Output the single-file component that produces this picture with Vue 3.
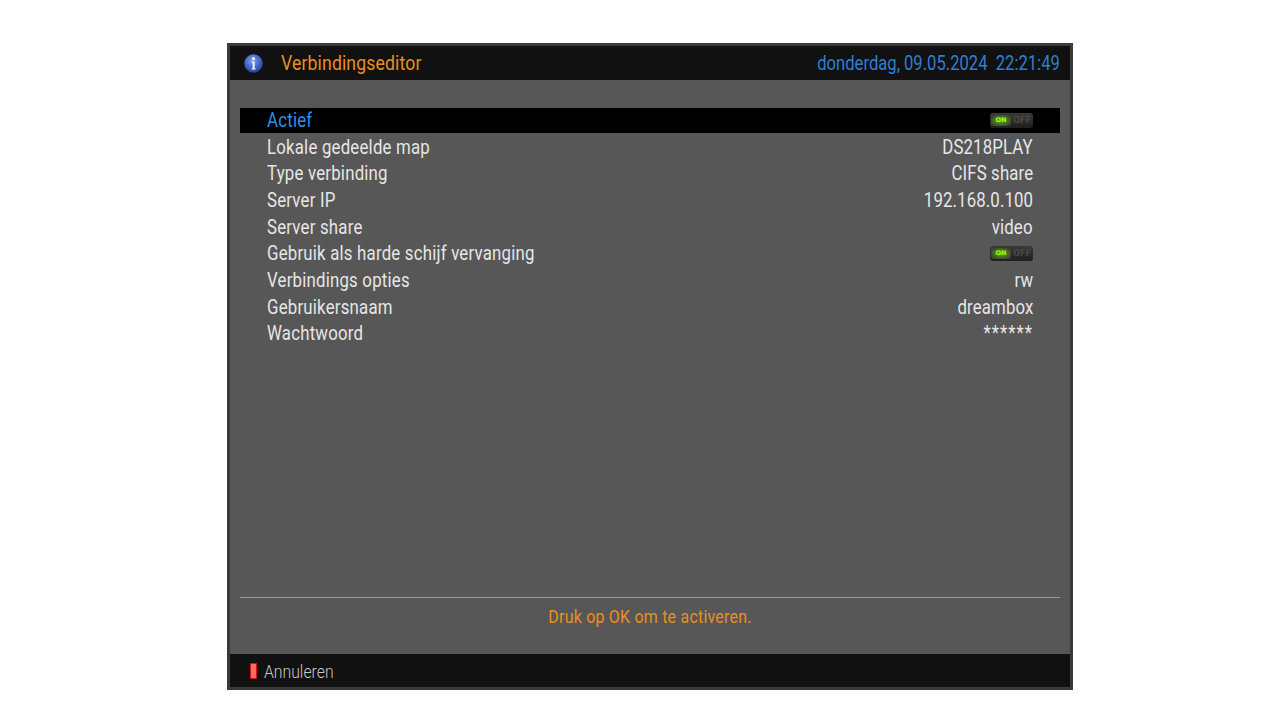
<template>
  <div class="page">
    <div class="screen">
      <div class="header">
        <svg class="info-icon" width="19" height="19" viewBox="0 0 18 18">
          <defs>
            <radialGradient id="infoBg" cx="45%" cy="35%" r="70%">
              <stop offset="0" stop-color="#7d9ff0" />
              <stop offset="0.6" stop-color="#3f63c4" />
              <stop offset="1" stop-color="#22388a" />
            </radialGradient>
          </defs>
          <circle cx="9" cy="9" r="8.8" fill="url(#infoBg)" />
          <circle cx="9" cy="4.4" r="1.5" fill="#f2f4fb" />
          <path d="M7.2 7.2h2.9v6.5h1v1.1H7.2v-1.1h1V8.3h-1z" fill="#f2f4fb" />
        </svg>
        <span class="title"><span class="narrow">Verbindingseditor</span></span>
        <span class="clock"><span class="narrow right">donderdag, 09.05.2024&nbsp;&nbsp;22:21:49</span></span>
      </div>

      <div class="list">
        <div v-for="row in rows" :key="row.label" class="row" :class="{ selected: row.selected }">
          <span class="label"><span class="narrow">{{ row.label }}</span></span>
          <span v-if="row.toggle" class="toggle">
            <span class="toggle-on">ON</span>
            <span class="toggle-off">OFF</span>
          </span>
          <span v-else class="value" :class="{ mask: row.mask }"><span class="narrow right">{{ row.value }}</span></span>
        </div>
      </div>

      <div class="help">
        <span class="narrow center">Druk op OK om te activeren.</span>
      </div>

      <div class="footer">
        <span class="red-key"></span>
        <span class="cancel"><span class="narrow">Annuleren</span></span>
      </div>
    </div>
  </div>
</template>

<script setup>
const rows = [
  { label: 'Actief', toggle: true, selected: true },
  { label: 'Lokale gedeelde map', value: 'DS218PLAY' },
  { label: 'Type verbinding', value: 'CIFS share' },
  { label: 'Server IP', value: '192.168.0.100' },
  { label: 'Server share', value: 'video' },
  { label: 'Gebruik als harde schijf vervanging', toggle: true },
  { label: 'Verbindings opties', value: 'rw' },
  { label: 'Gebruikersnaam', value: 'dreambox' },
  { label: 'Wachtwoord', value: '******', mask: true }
]
</script>

<style>
html,
body {
  background: #fff;
}
</style>

<style scoped>
.page {
  width: 1280px;
  height: 720px;
  background: #fff;
  padding-top: 43px;
  box-sizing: border-box;
  font-family: Roboto, "Liberation Sans", sans-serif;
  overflow: hidden;
}

.screen {
  width: 846px;
  height: 647px;
  margin-left: 227px;
  box-sizing: border-box;
  border: 3px solid #3a3a3a;
  background: #575757;
  display: flex;
  flex-direction: column;
}

.narrow {
  display: inline-block;
  transform: scaleX(0.84);
  transform-origin: left center;
  white-space: nowrap;
}

.narrow.right {
  transform-origin: right center;
}

.narrow.center {
  transform-origin: center center;
}

.header {
  height: 34px;
  flex: none;
  background: #111;
  display: flex;
  align-items: center;
  padding: 0 10px 0 14px;
}

.info-icon {
  flex: none;
}

.title {
  margin-left: 18px;
  font-size: 21px;
  letter-spacing: 0.15px;
  color: #e8901f;
}

.clock {
  margin-left: auto;
  padding-top: 1px;
  font-size: 19.8px;
  color: #2f7fd0;
}

.list {
  flex: none;
  height: 518px;
  margin: 0 10px;
  padding-top: 27px;
  box-sizing: border-box;
  border-bottom: 1px solid #9a9a9a;
}

.row {
  height: 26.67px;
  display: flex;
  align-items: center;
  justify-content: space-between;
  padding: 0 27px 1px;
  font-size: 20px;
  letter-spacing: 0.25px;
  color: #e6e6e6;
  box-sizing: border-box;
}

.row.selected {
  height: 27px;
  background: #000;
  color: #2f8fe8;
  border-top: 1px solid #1560b8;
  border-bottom: 1px solid #1560b8;
}

.value {
  letter-spacing: 0.15px;
}

.value.mask {
  letter-spacing: 1.2px;
}

.toggle {
  width: 43px;
  height: 15px;
  border-radius: 3px;
  background: linear-gradient(#3a3a3a, #1f1f1f);
  display: flex;
  align-items: center;
  font-family: "DejaVu Sans", sans-serif;
  font-size: 6.5px;
  font-weight: 700;
  letter-spacing: 0;
}

.toggle-on {
  width: 20px;
  height: 11px;
  margin-left: 1px;
  line-height: 11px;
  text-align: center;
  color: #96ff00;
  background: radial-gradient(ellipse at center, #6aa814, #33382c 90%);
  border-radius: 2px;
}

.toggle-off {
  flex: 1;
  text-align: center;
  font-size: 8px;
  color: #4a493f;
}

.help {
  height: 56px;
  flex: none;
  padding-top: 7px;
  box-sizing: border-box;
  text-align: center;
  font-size: 19px;
  letter-spacing: 0.26px;
  color: #e8901f;
}

.footer {
  height: 33px;
  flex: none;
  margin-top: auto;
  background: #111;
  display: flex;
  align-items: center;
  padding-left: 20px;
}

.red-key {
  width: 7px;
  height: 16px;
  box-sizing: border-box;
  background: #ff6a60;
  border: 1.5px solid #c81414;
  flex: none;
}

.cancel {
  margin-left: 7px;
  padding-top: 3px;
  font-size: 18.8px;
  font-weight: 300;
  color: #c8c8c8;
}
</style>
